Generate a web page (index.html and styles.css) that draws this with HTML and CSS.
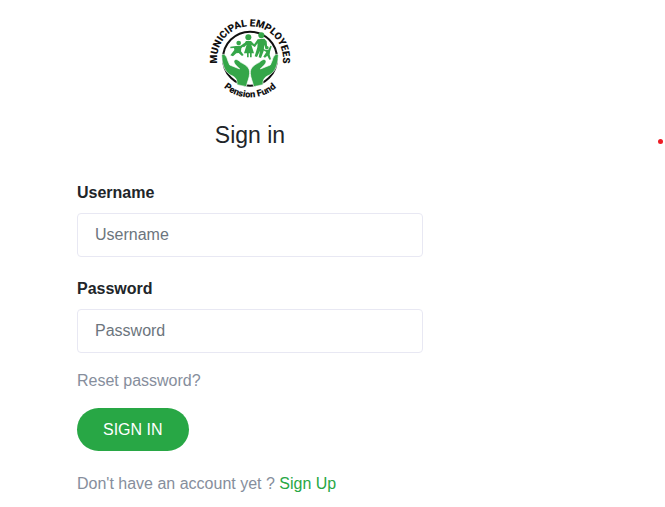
FILE: index.html
```html
<!DOCTYPE html>
<html lang="en">
<head>
  <meta charset="UTF-8">
  <meta name="viewport" content="width=device-width, initial-scale=1.0">
  <title>Sign in</title>
  <link rel="stylesheet" href="styles.css">
</head>
<body>
<div class="page">
  <main class="login-panel">
    <div class="logo">
      <svg class="logo-image" viewBox="0 0 300 285" role="img" aria-label="Municipal Employees Pension Fund">
        <defs>
          <path id="arcTop" d="M54 172 A99 99 0 1 1 246 172"/>
          <path id="arcBottom" d="M50 208 A119 119 0 0 0 250 208"/>
        </defs>
        <circle cx="150" cy="146" r="81" fill="#fff" stroke="#111" stroke-width="6"/>
        <!-- family -->
        <g class="logo-green">
          <circle cx="116" cy="99" r="7"/>
          <path d="M91 110l17-2 14-1 11-8 3 4-12 12-1 9 8 11-5 3-10-9-7 1-10 9-8-3 12-16-1-6-11 1z"/>
          <circle cx="145" cy="82" r="9"/>
          <path d="M138 93h15l14 14-3 4-10-7 8 26h-7v12h-5v-12h-4v12h-5v-12h-9l8-26-8 8-5-3z"/>
          <circle cx="184" cy="76" r="9"/>
          <path d="M173 88l20-2 7 8 2 23-5 1-4-14-2 19-8 21-7-2 4-20-9 19-7-2 8-27 1-12-8 10-5-4z"/>
          <circle cx="201" cy="113" r="5"/>
          <path d="M188 116l10 4 7-1 6-12 4 2-5 16-1 9 4 14-5 1-6-12-7 6-5-3 9-14-12-7z"/>
        </g>
        <!-- hands -->
        <g class="logo-green logo-hands">
          <path d="M65 136C71 128 80 137 83 151L89 165L119 177C111 168 98 159 103 151C108 145 116 151 122 157C137 165 150 172 149 190C148 205 142 214 139 230L111 224C112 211 108 203 98 198C79 191 67 174 65 136z"/>
          <path d="M235 136C229 128 220 137 217 151L211 165L181 177C189 168 202 159 197 151C192 145 184 151 178 157C163 165 150 172 151 190C152 205 158 214 161 230L189 224C188 211 192 203 202 198C221 191 233 174 235 136z"/>
        </g>
        <text class="logo-name"><textPath href="#arcTop" startOffset="50%">MUNICIPAL EMPLOYEES</textPath></text>
        <text class="logo-fund"><textPath href="#arcBottom" startOffset="50%">Pension Fund</textPath></text>
      </svg>
    </div>
    <h1 class="title">Sign in</h1>

    <form class="login-form">
      <div class="form-group">
        <label class="form-label" for="username">Username</label>
        <input type="text" id="username" class="form-input" placeholder="Username">
      </div>
      <div class="form-group">
        <label class="form-label" for="password">Password</label>
        <input type="password" id="password" class="form-input" placeholder="Password">
      </div>
      <a href="#" class="reset-link">Reset password?</a>
      <button type="submit" class="btn-signin">SIGN IN</button>
    </form>

    <p class="signup">Don't have an account yet ? <a href="#" class="signup-link">Sign Up</a></p>
  </main>
  <aside class="side">
    <span class="dot"></span>
  </aside>
</div>
</body>
</html>
```

FILE: styles.css
```css
* {
  margin: 0;
  padding: 0;
  box-sizing: border-box;
}

body {
  font-family: "Liberation Sans", Arial, sans-serif;
  font-size: 16px;
  line-height: 24px;
  color: #212529;
  background: #fff;
}

.page {
  display: flex;
}

.login-panel {
  flex: 0 1 500px;
  padding: 10px 77px;
}

.logo {
  text-align: center;
}

.logo-image {
  display: block;
  width: 100px;
  height: 95px;
  margin: 0 auto;
}

.logo-green {
  fill: #35a649;
}

.logo-hands {
  stroke: #fff;
  stroke-width: 2;
}

.logo-name,
.logo-fund {
  font-family: Roboto, "Liberation Sans", sans-serif;
  font-weight: 900;
  text-anchor: middle;
  fill: #111;
}

.logo-name {
  font-size: 30px;
}

.logo-fund {
  font-size: 28px;
}

.title {
  margin: 16px 0 28px;
  font-size: 23px;
  font-weight: normal;
  line-height: 28px;
  text-align: center;
}

.login-form {
  display: flex;
  flex-direction: column;
  align-items: flex-start;
}

.form-group {
  width: 100%;
  margin-bottom: 16px;
}

.form-label {
  display: block;
  margin-bottom: 4px;
  font-weight: bold;
  line-height: 32px;
}

.form-input {
  display: block;
  width: 100%;
  height: 44px;
  padding: 0 17px;
  border: 1px solid #e8e8f3;
  border-radius: 4px;
  background: #fff;
  color: #495057;
  font: inherit;
}

.form-input::placeholder {
  color: #6c757d;
  opacity: 1;
}

.form-input:focus {
  outline: none;
  border-color: #28a745;
}

.reset-link {
  margin-bottom: 15px;
  color: #868e9c;
  text-decoration: none;
}

.btn-signin {
  height: 43px;
  padding: 0 26px;
  border: none;
  border-radius: 22px;
  background: #28a745;
  color: #fff;
  font: inherit;
  cursor: pointer;
}

.signup {
  margin-top: 21px;
  color: #868e9c;
}

.signup-link {
  color: #28a745;
  text-decoration: none;
}

.side {
  flex: 1;
  display: flex;
  justify-content: flex-end;
  padding: 139px 2px 0 0;
}

.dot {
  width: 5px;
  height: 5px;
  border-radius: 50%;
  background: #ed1c24;
}
```
